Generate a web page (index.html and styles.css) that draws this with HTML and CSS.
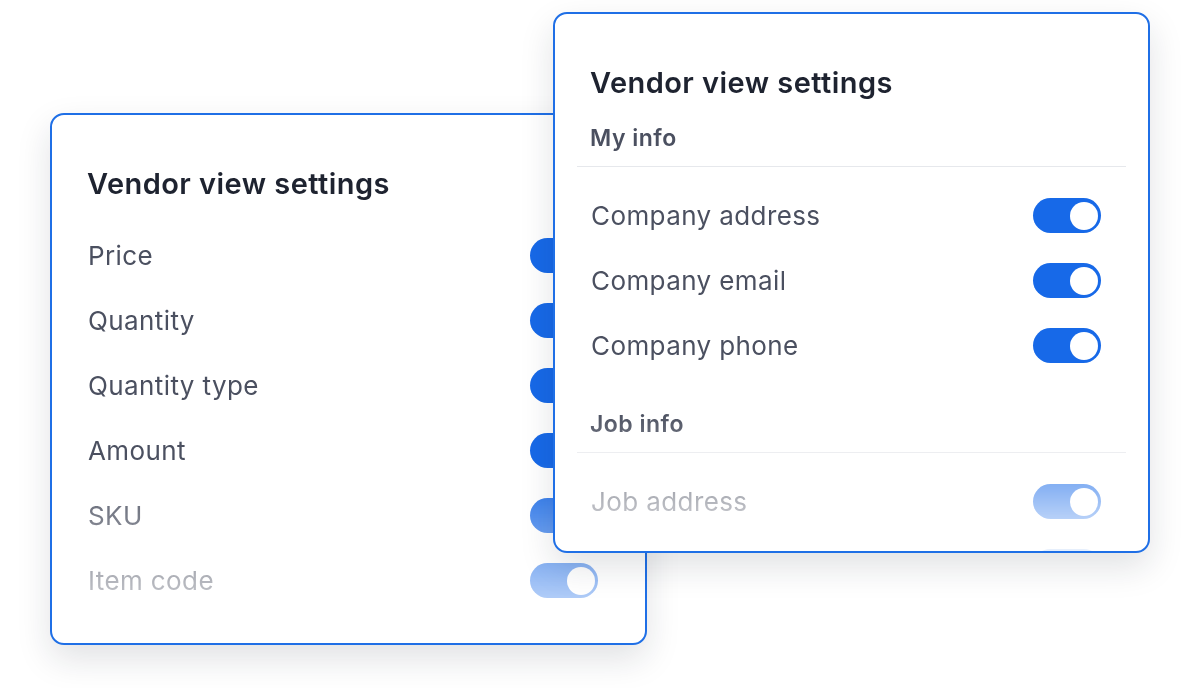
FILE: index.html
```html
<!DOCTYPE html>
<html lang="en">

<head>
    <meta charset="UTF-8">
    <meta name="viewport" content="width=device-width, initial-scale=1.0">
    <title>Vendor view settings</title>
    <link rel="stylesheet" href="styles.css">
</head>

<body>

    <div class="stage">

        <div class="card card-back">
            <div class="card-inner">
                <h2 class="card-title">Vendor view settings</h2>
                <div class="rows">
                    <div class="row"><span class="label">Price</span><span class="toggle"></span></div>
                    <div class="row"><span class="label">Quantity</span><span class="toggle"></span></div>
                    <div class="row"><span class="label">Quantity type</span><span class="toggle"></span></div>
                    <div class="row"><span class="label">Amount</span><span class="toggle"></span></div>
                    <div class="row"><span class="label">SKU</span><span class="toggle"></span></div>
                    <div class="row"><span class="label">Item code</span><span class="toggle"></span></div>
                </div>
            </div>
        </div>

        <div class="card card-front">
            <div class="card-inner">
                <h2 class="card-title">Vendor view settings</h2>
                <div class="section">
                    <h3 class="section-title">My info</h3>
                    <div class="rows">
                        <div class="row"><span class="label">Company address</span><span class="toggle"></span></div>
                        <div class="row"><span class="label">Company email</span><span class="toggle"></span></div>
                        <div class="row"><span class="label">Company phone</span><span class="toggle"></span></div>
                    </div>
                </div>
                <div class="section">
                    <h3 class="section-title">Job info</h3>
                    <div class="rows">
                        <div class="row"><span class="label">Job address</span><span class="toggle"></span></div>
                        <div class="row"><span class="label"></span><span class="toggle"></span></div>
                    </div>
                </div>
            </div>
        </div>

    </div>

</body>

</html>
```

FILE: styles.css
```css
*,
*::before,
*::after {
    box-sizing: border-box;
}

body {
    margin: 0;
    padding: 0;
    background: #ffffff;
    font-family: Inter, "Noto Sans", sans-serif;
    color: #4b5060;
}

.stage {
    position: relative;
    width: 1200px;
    height: 688px;
    overflow: hidden;
}

/* the two cards float on a free canvas and overlap */
.card {
    position: absolute;
    width: 597px;
    background: #ffffff;
    border: 2px solid #1f6fe6;
    border-radius: 14px;
    box-shadow: 0 14px 34px rgba(20, 30, 50, 0.13);
    overflow: hidden;
}

.card-back {
    left: 50px;
    top: 113px;
    height: 532px;
}

.card-front {
    left: 553px;
    top: 12px;
    height: 541px;
}

.card-inner {
    height: 100%;
    padding: 52px 22px 0;
}

.card-back .card-inner {
    -webkit-mask-image: linear-gradient(to bottom, #000 66%, rgba(0, 0, 0, 0.12) 100%);
    mask-image: linear-gradient(to bottom, #000 66%, rgba(0, 0, 0, 0.12) 100%);
}

.card-front .card-inner {
    -webkit-mask-image: linear-gradient(to bottom, #000 74%, rgba(0, 0, 0, 0.1) 100%);
    mask-image: linear-gradient(to bottom, #000 74%, rgba(0, 0, 0, 0.1) 100%);
}

.card-title {
    margin: 0;
    padding: 0 13px;
    font-size: 29px;
    line-height: 34px;
    font-weight: 600;
    letter-spacing: 0.45px;
    color: #1e2330;
}

.card-back .card-title {
    margin-bottom: 22px;
}

.section-title {
    margin: 23px 0 0;
    padding: 0 13px 13px;
    font-size: 23px;
    line-height: 30px;
    font-weight: 600;
    letter-spacing: 0.5px;
    color: #4b5060;
    border-bottom: 1.5px solid #e6e8ec;
}

.section .rows {
    margin-top: 16px;
}

.section + .section .section-title {
    margin-top: 31px;
}

.row {
    display: flex;
    align-items: center;
    justify-content: space-between;
    height: 65px;
    padding: 0 25px 0 14px;
}

.label {
    font-size: 26px;
    letter-spacing: 0.4px;
    color: #4b5060;
}

.toggle {
    position: relative;
    width: 68px;
    height: 35px;
    border-radius: 18px;
    background: #1769e8;
}

.toggle::after {
    content: "";
    position: absolute;
    top: 3.5px;
    right: 3.5px;
    width: 28px;
    height: 28px;
    border-radius: 50%;
    background: #ffffff;
}
```
